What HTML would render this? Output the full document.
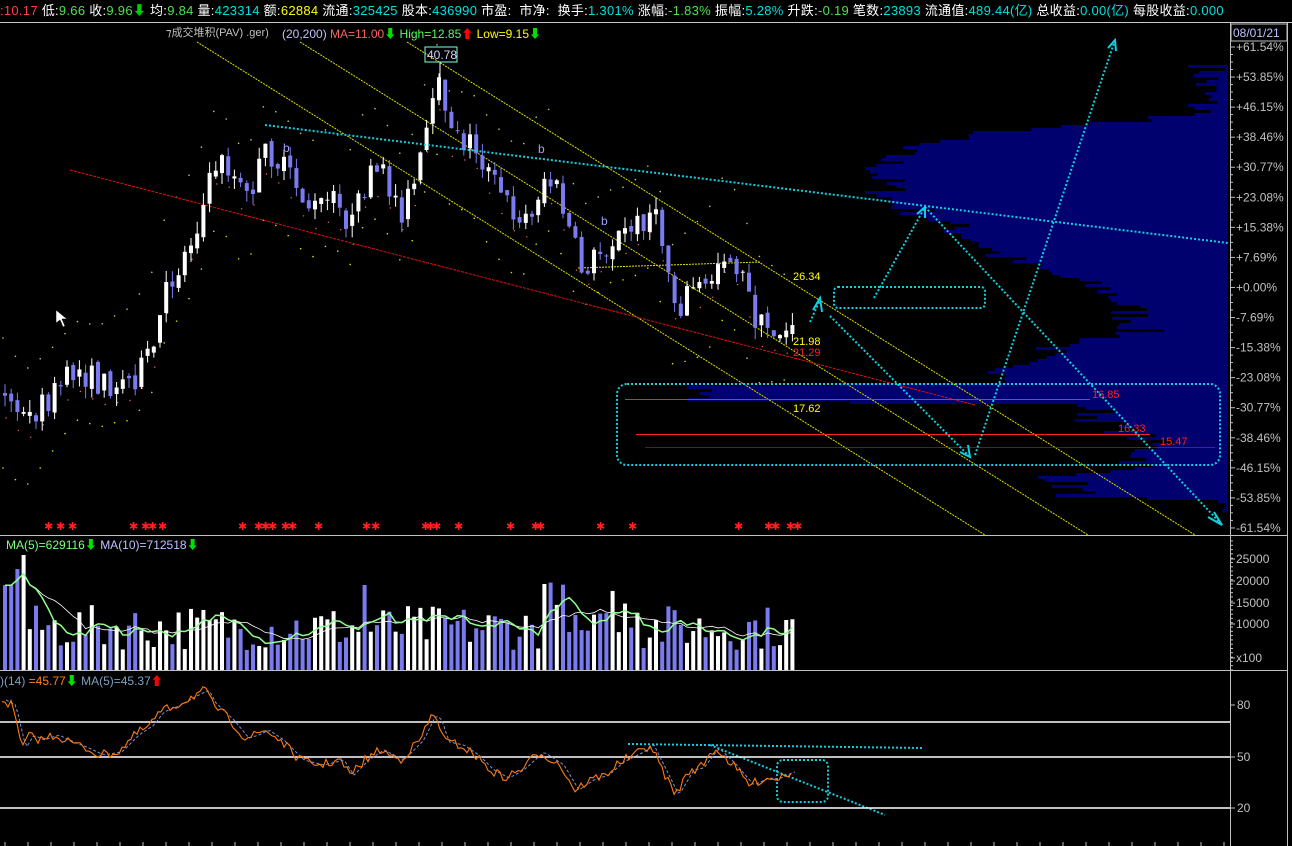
<!DOCTYPE html><html><head><meta charset="utf-8"><style>
body{margin:0;background:#000;width:1292px;height:846px;overflow:hidden;font-family:"Liberation Sans","Noto Sans CJK SC",sans-serif}
#top{position:absolute;left:0;top:0;height:22px;width:1292px;font-size:13px;line-height:22px;white-space:nowrap;color:#fff;letter-spacing:0.28px}
.c{color:#00e0e0}.g{color:#50e050}.r{color:#ff4040}.y{color:#ffff00}
svg{position:absolute;left:0;top:0}
svg text{font-family:"Liberation Sans","Noto Sans CJK SC",sans-serif}
</style></head><body>
<svg id="s" width="1292" height="846" xmlns="http://www.w3.org/2000/svg">
<line x1="0" y1="22.5" x2="1292" y2="22.5" stroke="#c8c8c8"/>
<line x1="1230.5" y1="23" x2="1230.5" y2="846" stroke="#c0c0c0"/>
<line x1="1287.5" y1="23" x2="1287.5" y2="846" stroke="#c0c0c0"/>
<line x1="0" y1="535.5" x2="1288" y2="535.5" stroke="#c0c0c0"/>
<line x1="0" y1="670.5" x2="1288" y2="670.5" stroke="#c0c0c0"/>
<rect x="1231" y="24" width="56" height="17" fill="none" stroke="#c0c0c0"/>
<text x="1233" y="37" font-size="12" fill="#c0c0ff">08/01/21</text>
<g id="prof"></g>
<g id="bb"></g>
<g stroke="#e0e000" stroke-width="1" stroke-dasharray="2,1">
<line x1="197" y1="42" x2="985" y2="535"/>
<line x1="300" y1="42" x2="1088" y2="535"/>
<line x1="407" y1="42" x2="1195" y2="535"/>
<line x1="578" y1="268" x2="760" y2="262"/>
</g>
<line x1="70" y1="170" x2="975" y2="405" stroke="#e01010" stroke-dasharray="3,1"/>
<g stroke="#ff2020" stroke-width="1">
<line x1="625" y1="399.5" x2="1090" y2="399.5"/>
<line x1="636" y1="434.5" x2="1150" y2="434.5"/>
<line x1="645" y1="447.5" x2="1215" y2="447.5" stroke-width="0.6"/>
</g>
<g id="cand"></g>
<g stroke="#10d0e0" stroke-width="2" stroke-dasharray="2,2" fill="none">
<line x1="265" y1="125" x2="1228" y2="243"/>
<line x1="810" y1="322" x2="820" y2="300"/>
<line x1="874" y1="298" x2="925" y2="207"/>
<line x1="925" y1="207" x2="1222" y2="525"/>
<line x1="830" y1="316" x2="970" y2="457"/>
<line x1="975" y1="455" x2="1115" y2="40"/>
<rect x="834" y="287" width="151" height="21" rx="4"/>
<rect x="617" y="384" width="603" height="81" rx="10"/>
<rect x="777" y="760" width="51" height="42" rx="6"/>
<line x1="628" y1="744" x2="922" y2="748"/>
<line x1="710" y1="745" x2="885" y2="815"/>
</g>
<g stroke="#10d0e0" stroke-width="2" fill="none">
<path d="M813 310 L820 298 L822 312"/><path d="M917 214 L925 207 L925 218"/>
<path d="M1208 517 L1222 525 L1214 512"/><path d="M960 452 L970 457 L968 445"/>
<path d="M1108 48 L1115 40 L1116 51"/>
</g>
<rect x="425" y="47" width="32" height="15" fill="none" stroke="#80ffe0"/>
<text x="427" y="59" font-size="12" fill="#d0d0ff">40.78</text>
<g font-size="11">
<text x="793" y="280" fill="#ffff00">26.34</text>
<text x="793" y="345" fill="#ffff00">21.98</text>
<text x="793" y="356" fill="#ff2020">21.29</text>
<text x="793" y="412" fill="#ffff00">17.62</text>
<text x="1092" y="398" fill="#ff2020">16.85</text>
<text x="1118" y="432" fill="#ff2020">16.33</text>
<text x="1160" y="445" fill="#ff2020">15.47</text>
</g>
<g font-size="12" fill="#a0a0ff"><text x="283" y="152">b</text><text x="538" y="153">b</text><text x="601" y="225">b</text></g>
<text x="166" y="36" font-size="11" fill="#c0c0c0">⁊成交堆积(PAV)  .ger)</text>
<text x="282" y="38" font-size="12" fill="#c0c0ff">(20,200) <tspan fill="#ff6060">MA=11.00</tspan><tspan fill="#00e000">⬇</tspan> <tspan fill="#50ff50">High=12.85</tspan><tspan fill="#ff0000">⬆</tspan> <tspan fill="#ffff00">Low=9.15</tspan><tspan fill="#00e000">⬇</tspan></text>
<g id="ax" font-size="12" fill="#c0c0c0"></g>
<g id="stars" fill="#ff2020" font-size="11"></g>
<g id="vol"></g>
<text x="6" y="549" font-size="12" fill="#80ff80">MA(5)=629116<tspan fill="#00e000">⬇</tspan> <tspan fill="#c0c0ff">MA(10)=712518</tspan><tspan fill="#00e000">⬇</tspan></text>
<g stroke="#ffffff" stroke-width="1.5"><line x1="0" y1="722" x2="1230" y2="722"/><line x1="0" y1="757" x2="1230" y2="757"/><line x1="0" y1="808" x2="1230" y2="808"/></g>
<g id="rsi"></g>
<text x="0" y="685" font-size="12" fill="#80a0c0">)(14) <tspan fill="#ff8020">=45.77</tspan><tspan fill="#00e000">⬇</tspan> MA(5)=45.37<tspan fill="#ff0000">⬆</tspan></text>
<path d="M56 310 L56 323 L60 320 L63 327 L65 326 L62 319 L67 319 Z" fill="#fff" stroke="#000" stroke-width="0.5"/>
</svg>
<div id="top"><span class="r">:10.17</span> 低:<span class="g">9.66</span> 收:<span class="g">9.96</span><span style="color:#0c0">⬇</span> 均:<span class="g">9.84</span> 量:<span class="c">423314</span> 额:<span class="y">62884</span> 流通:<span class="c">325425</span> 股本:<span class="c">436990</span> 市盈:&nbsp; 市净:&nbsp; 换手:<span class="c">1.301%</span> 涨幅:<span class="g">-1.83%</span> 振幅:<span class="c">5.28%</span> 升跌:<span class="g">-0.19</span> 笔数:<span class="c">23893</span> 流通值:<span class="c">489.44(亿)</span> 总收益:<span class="c">0.00(亿)</span> 每股收益:<span class="c">0.000</span></div>
<script>
var NS="http://www.w3.org/2000/svg";
function el(p,t,a){var e=document.createElementNS(NS,t);for(var k in a)e.setAttribute(k,a[k]);document.getElementById(p).appendChild(e);return e;}
var seed=7;function rnd(){seed=(seed*16807)%2147483647;return seed/2147483647;}
function interp(pts,x){for(var i=1;i<pts.length;i++){if(x<=pts[i][0]){var a=pts[i-1],b=pts[i];return a[1]+(b[1]-a[1])*(x-a[0])/(b[0]-a[0]);}}return pts[pts.length-1][1];}
var labs=["+61.54%","+53.85%","+46.15%","+38.46%","+30.77%","+23.08%","+15.38%","+7.69%","+0.00%","-7.69%","-15.38%","-23.08%","-30.77%","-38.46%","-46.15%","-53.85%","-61.54%"];
for(var i=0;i<17;i++){var y=47+i*30.06;el("ax","line",{x1:1230,x2:1235,y1:y,y2:y,stroke:"#c0c0c0"});var t=el("ax","text",{x:1236,y:y+4});t.textContent=labs[i];
for(var j=1;j<4;j++)if(i<16)el("ax","line",{x1:1230,x2:1233,y1:y+j*7.5,y2:y+j*7.5,stroke:"#c0c0c0"});}
[["25000",563],["20000",585],["15000",607],["10000",628],["x100",662]].forEach(function(a){el("ax","line",{x1:1230,x2:1235,y1:a[1]-4,y2:a[1]-4,stroke:"#c0c0c0"});var t=el("ax","text",{x:1236,y:a[1]});t.textContent=a[0];});
for(var y=541;y<670;y+=4.3)el("ax","line",{x1:1230,x2:1233,y1:y,y2:y,stroke:"#c0c0c0"});
[["80",709],["50",761],["20",812]].forEach(function(a){el("ax","line",{x1:1230,x2:1235,y1:a[1]-4,y2:a[1]-4,stroke:"#c0c0c0"});var t=el("ax","text",{x:1237,y:a[1]});t.textContent=a[0];});
for(var x=5;x<1230;x+=23)el("ax","line",{x1:x,x2:x,y1:842,y2:846,stroke:"#c0c0c0"});
var pp=[[65,1213],[80,1205],[110,1200],[118,1160],[125,1040],[135,960],[145,900],[170,880],[200,890],[215,930],[240,980],[255,1000],[275,1060],[290,1110],[310,1130],[330,1140],[345,1060],[365,1000],[380,1030],[385,700],[400,700],[403,1090],[420,1100],[440,1150],[465,1140],[475,1060],[495,1080],[500,1200],[510,1210]];
for(var y=65;y<512;y+=3){var l=interp(pp,y)+(rnd()-0.5)*50;if(l>1226)l=1226;el("prof","rect",{x:l,y:y,width:1228-l,height:3,fill:"#00006e"});}
var K=[[0,395],[25,420],[50,395],[75,370],[100,385],[130,380],[150,355],[165,290],[185,250],[200,210],[215,160],[225,165],[245,200],[265,150],[290,180],[310,210],[330,200],[350,225],[365,180],[380,175],[400,210],[415,180],[425,130],[440,80],[450,140],[470,140],[490,180],[510,210],[530,220],[540,175],[555,190],[570,240],[580,270],[595,255],[610,240],[630,230],[650,210],[660,240],[675,310],[690,285],[705,290],[720,250],[735,265],[745,290],[755,325],[770,330],[792,335]];
var prev=395,closes=[];
for(var i=0;i<128;i++){var x=3+i*6.2;var c=interp(K,x)+(rnd()-0.5)*28;var o=prev+(rnd()-0.5)*8;var up=c<o;
var hi=Math.min(c,o)-rnd()*12,lo=Math.max(c,o)+rnd()*12;var col=up?"#ffffff":"#7b7bf0";
el("cand","line",{x1:x+2,x2:x+2,y1:hi,y2:lo,stroke:col});
el("cand","rect",{x:x,y:Math.min(c,o),width:4,height:Math.max(1,Math.abs(c-o)),fill:col});
closes.push([x,c,up]);prev=c;}
el("cand","line",{x1:440,x2:440,y1:62,y2:100,stroke:"#fff"});
for(var i=0;i<128;i+=2){var x=closes[i][0];var m=interp(K,x);
el("bb","circle",{cx:x,cy:m-60+Math.sin(i/5)*15,r:0.8,fill:"#a0e060"});
el("bb","circle",{cx:x,cy:m+55+Math.cos(i/6)*15,r:0.8,fill:"#e0e000"});
el("bb","circle",{cx:x+3,cy:m+20,r:0.7,fill:"#ff6060"});}
[48,60,72,133,145,152,162,242,258,265,272,285,292,318,366,375,425,430,436,458,510,535,540,600,632,738,768,775,790,797].forEach(function(x){var t=el("stars","text",{x:x-4,y:530});t.textContent="✱";});
var vh=[];for(var i=0;i<128;i++){var x=closes[i][0];var h=20+rnd()*45;if(i<3)h=80+rnd()*30;if(i==3)h=115;if([58,96,130].indexOf(i)>=0)h=85;if(i>86&&i<103)h=35+rnd()*55;if(i==126)h=50;vh.push(h);
el("vol","rect",{x:x,y:670-h,width:4,height:h,fill:closes[i][2]?"#ffffff":"#7b7bf0"});}
function ma(n){var d="";for(var i=0;i<128;i++){var s=0,c=0;for(var j=Math.max(0,i-n+1);j<=i;j++){s+=vh[j];c++;}d+=(i?"L":"M")+(closes[i][0]+2)+" "+(670-s/c);}return d;}
el("vol","path",{d:ma(10),stroke:"#ffffff",fill:"none","stroke-width":0.8});
el("vol","path",{d:ma(5),stroke:"#90ff90",fill:"none","stroke-width":1.5});
var R=[[2,700],[12,705],[22,748],[30,735],[40,740],[55,735],[70,742],[85,748],[100,755],[118,752],[135,735],[150,725],[160,712],[175,706],[195,695],[205,690],[212,703],[230,720],[245,738],[255,735],[265,730],[280,740],[300,760],[320,765],[340,760],[350,775],[365,760],[380,750],[400,760],[420,740],[432,715],[438,720],[445,742],[460,745],[475,755],[490,770],[505,778],[520,770],[540,752],[560,765],[575,790],[590,780],[605,775],[620,762],[640,752],[650,745],[665,775],[675,795],[690,770],[700,768],[715,748],[730,762],[750,785],[765,778],[775,779],[790,772]];
var d="",d2="";for(var x=2;x<792;x+=3){var y=interp(R,x)+(rnd()-0.5)*9;d+=(x==2?"M":"L")+x+" "+y.toFixed(1);d2+=(x==2?"M":"L")+(x+4)+" "+interp(R,x).toFixed(1);}
el("rsi","path",{d:d2,stroke:"#8090d0",fill:"none","stroke-dasharray":"3,2","stroke-width":1});
el("rsi","path",{d:d,stroke:"#ff7a10",fill:"none","stroke-width":1.1});
</script>
</body></html>
